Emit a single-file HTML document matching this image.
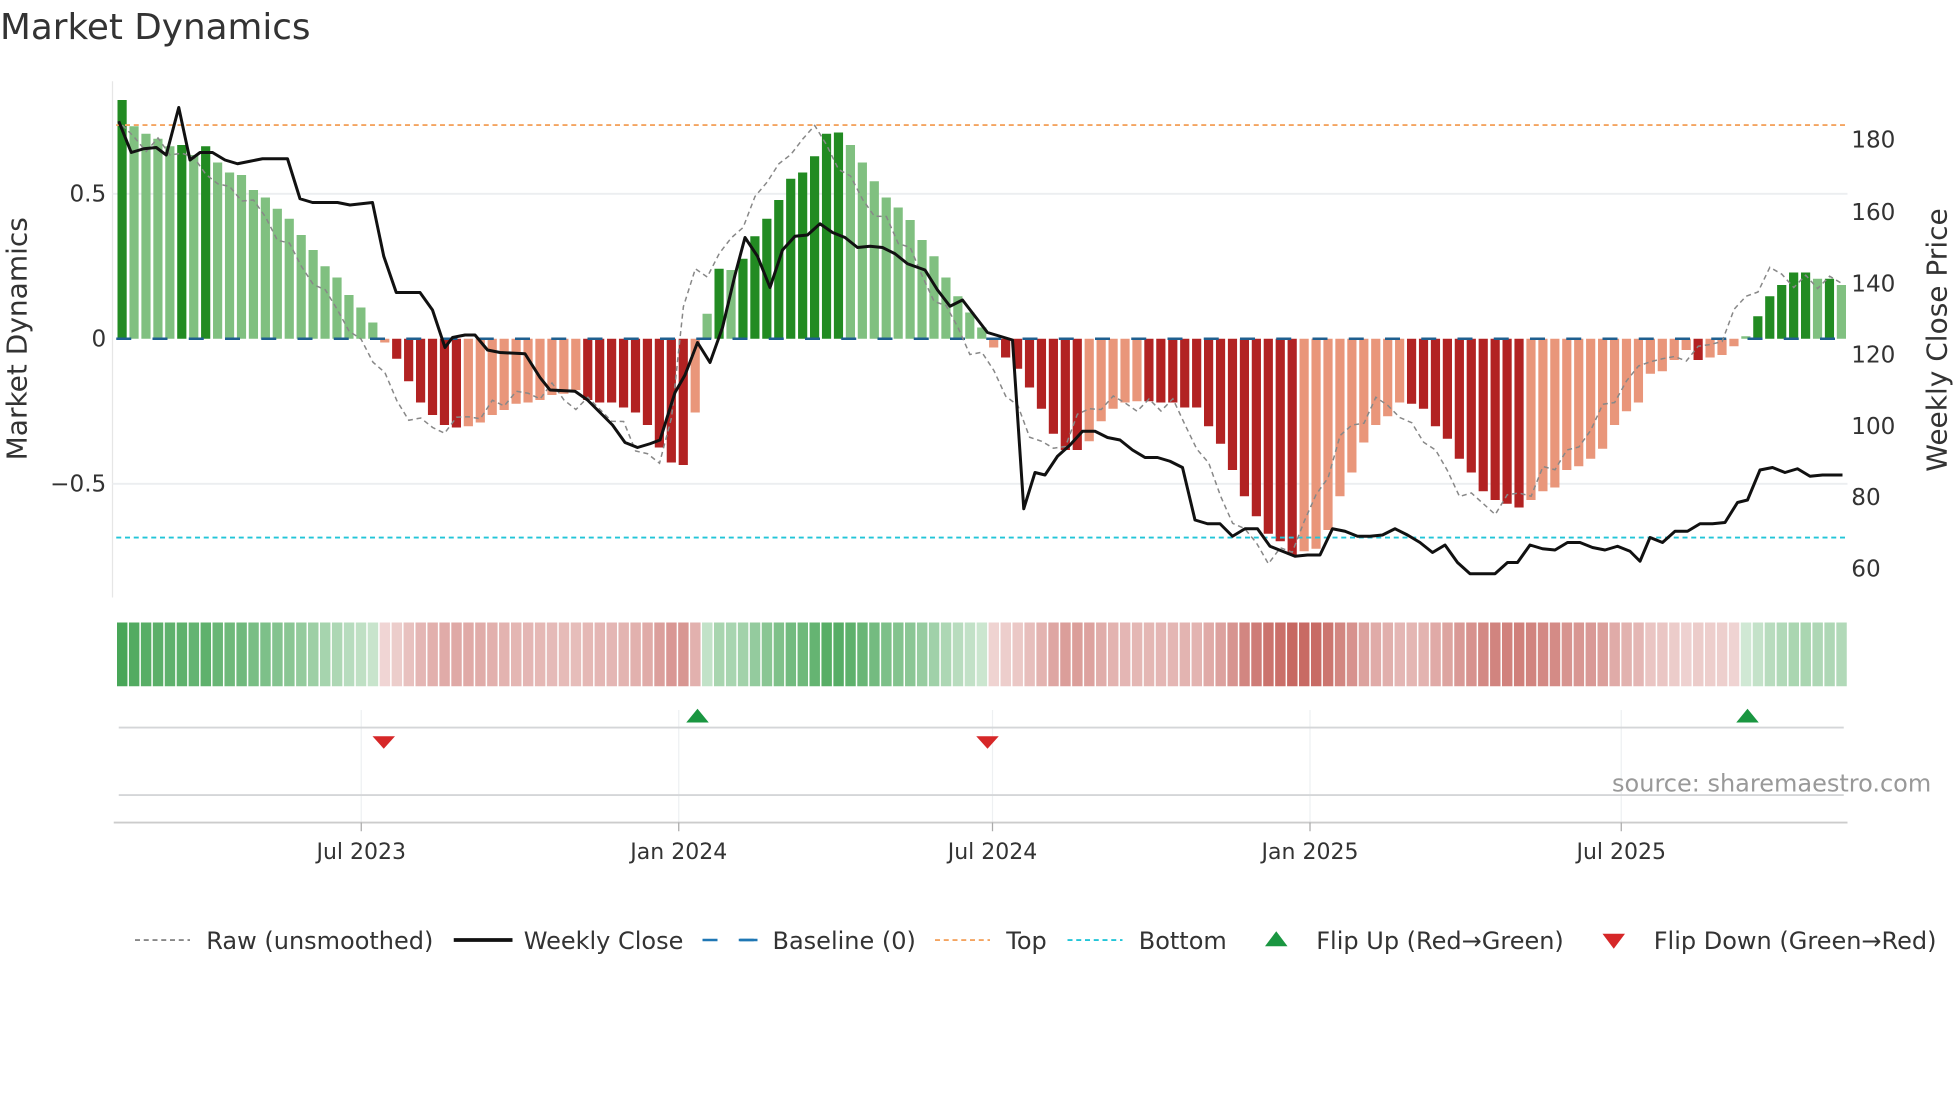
<!DOCTYPE html>
<html><head><meta charset="utf-8"><style>
html,body{margin:0;padding:0;background:#fff;}
svg{display:block;font-family:"DejaVu Sans","Liberation Sans",sans-serif;}
</style></head><body>
<svg id="s" width="1960" height="1102" viewBox="0 0 1568 881.6" xmlns="http://www.w3.org/2000/svg">
<rect width="1568" height="882" fill="#fff"/>
<text x="0" y="31" font-size="28.6" fill="#333">Market Dynamics</text>
<line x1="90" y1="65" x2="90" y2="478" stroke="#e6e6e6" stroke-width="1"/>
<line x1="90" y1="155" x2="1478" y2="155" stroke="#eceef0" stroke-width="1.5"/>
<line x1="90" y1="387" x2="1478" y2="387" stroke="#eceef0" stroke-width="1.5"/>
<g id="bars"></g>
<g id="strip"></g>
<line x1="93" y1="100" x2="1478" y2="100" stroke="#f4a460" stroke-width="1.5" stroke-dasharray="4,3"/>
<line x1="93" y1="430" x2="1478" y2="430" stroke="#22c5d8" stroke-width="1.5" stroke-dasharray="4,3"/>
<line x1="93" y1="271" x2="1478" y2="271" stroke="#1f5f8f" stroke-width="2" stroke-dasharray="12,17"/>
<polyline id="raw" fill="none" stroke="#888" stroke-width="1.2" stroke-dasharray="4,3"/>
<polyline id="close" fill="none" stroke="#111" stroke-width="2.4" stroke-linejoin="round"/>
<g font-size="18.5" fill="#333" text-anchor="end">
<text x="85" y="161">0.5</text><text x="85" y="277">0</text><text x="85" y="393">−0.5</text>
</g>
<g font-size="18.5" fill="#333">
<text x="1481" y="118">180</text><text x="1481" y="176">160</text><text x="1481" y="233">140</text><text x="1481" y="290">120</text><text x="1481" y="347">100</text><text x="1481" y="404">80</text><text x="1481" y="461">60</text>
</g>
<text transform="translate(21,271) rotate(-90)" font-size="22.4" fill="#333" text-anchor="middle">Market Dynamics</text>
<text transform="translate(1557,272) rotate(-90)" font-size="22.4" fill="#333" text-anchor="middle">Weekly Close Price</text>
<g stroke="#eef0f2" stroke-width="1">
<line x1="289" y1="568" x2="289" y2="658"/><line x1="543" y1="568" x2="543" y2="658"/><line x1="794" y1="568" x2="794" y2="658"/><line x1="1048" y1="568" x2="1048" y2="658"/><line x1="1297" y1="568" x2="1297" y2="658"/>
</g>
<line x1="95" y1="582" x2="1475" y2="582" stroke="#d4d6d8" stroke-width="1.5"/>
<line x1="95" y1="636" x2="1475" y2="636" stroke="#d4d6d8" stroke-width="1.5"/>
<line x1="91" y1="658" x2="1478" y2="658" stroke="#ccc" stroke-width="1.5"/>
<g stroke="#aaa" stroke-width="1"><line x1="289" y1="658" x2="289" y2="665"/><line x1="543" y1="658" x2="543" y2="665"/><line x1="794" y1="658" x2="794" y2="665"/><line x1="1048" y1="658" x2="1048" y2="665"/><line x1="1297" y1="658" x2="1297" y2="665"/></g>
<polygon points="298,589 316,589 307,599" fill="#d62728"/>
<polygon points="781,589 799,589 790,599" fill="#d62728"/>
<polygon points="549,578 567,578 558,567" fill="#1a9641"/>
<polygon points="1389,578 1407,578 1398,567" fill="#1a9641"/>
<g font-size="17.6" fill="#333" text-anchor="middle">
<text x="289" y="687">Jul 2023</text><text x="543" y="687">Jan 2024</text><text x="794" y="687">Jul 2024</text><text x="1048" y="687">Jan 2025</text><text x="1297" y="687">Jul 2025</text>
</g>
<text x="1545" y="633" font-size="19.2" fill="#999" text-anchor="end">source: sharemaestro.com</text>
<g font-size="19.2" fill="#333">
<line x1="108" y1="752" x2="152" y2="752" stroke="#888" stroke-width="1.5" stroke-dasharray="4,3"/>
<text x="165" y="759">Raw (unsmoothed)</text>
<line x1="363" y1="752" x2="410" y2="752" stroke="#111" stroke-width="3"/>
<text x="419" y="759">Weekly Close</text>
<line x1="562" y1="752" x2="606" y2="752" stroke="#1f77b4" stroke-width="2" stroke-dasharray="12,17"/>
<line x1="592" y1="752" x2="606" y2="752" stroke="#1f77b4" stroke-width="2"/>
<text x="618" y="759">Baseline (0)</text>
<line x1="748" y1="752" x2="792" y2="752" stroke="#f4a460" stroke-width="1.5" stroke-dasharray="4,3"/>
<text x="805" y="759">Top</text>
<line x1="854" y1="752" x2="898" y2="752" stroke="#22c5d8" stroke-width="1.5" stroke-dasharray="4,3"/>
<text x="911" y="759">Bottom</text>
<polygon points="1012,757 1030,757 1021,745" fill="#1a9641"/>
<text x="1053" y="759">Flip Up (Red→Green)</text>
<polygon points="1282,747 1300,747 1291,759" fill="#d62728"/>
<text x="1323" y="759">Flip Down (Green→Red)</text>
</g>
</svg>
<script>
var tops=[80,101,107,111,117,116,124,117,130,138,140,152,158,167,175,188,200,213,222,236,246,258,
274,287,305,322,332,340,342,341,338,332,328,323,322,320,316,315,312,320,322,322,326,330,340,358,370,372,330,
251,215,216,207,189,175,160,143,138,125,107,106,116,130,145,158,166,176,192,205,222,237,250,262,
278,286,295,310,327,347,360,360,353,337,327,322,321,321,322,322,326,326,341,355,376,397,413,427,433,444,441,439,424,397,378,354,340,333,322,323,327,341,351,367,378,393,400,403,406,400,393,390,376,373,367,359,340,329,322,299,297,288,280,288,286,284,277,269,253,237,228,218,218,223,223,228];
var N=tops.length,x0=93,w=(1478-93)/N,Z=271,svgns="http://www.w3.org/2000/svg";
var b=document.getElementById('bars'),st=document.getElementById('strip');
function el(t,a,p){var e=document.createElementNS(svgns,t);for(var k in a)e.setAttribute(k,a[k]);p.appendChild(e);return e;}
var raw=[];
for(var i=0;i<N;i++){
 var y=tops[i],v=(Z-y),pv=i>0?(Z-tops[i-1]):0;
 var dark=Math.abs(v)>=Math.abs(pv)&&(i==0||(v>0)==(pv>0)||Math.abs(pv)<5);
 var col=v>=0?(dark?'#228b22':'#80c080'):(dark?'#b22222':'#e9967a');
 var x=x0+i*w;
 el('rect',{x:x+1,y:Math.min(y,Z),width:w-2.2,height:Math.abs(v)||0.5,fill:col},b);
 var a=Math.min(1,0.25+0.75*Math.abs(v)/185);
 var c=v>=0?[72,166,88]:[196,96,90];
 var f='rgb('+c.map(function(q){return Math.round(255-(255-q)*a)}).join(',')+')';
 el('rect',{x:x+0.6,y:498,width:w-1.2,height:51,fill:f},st);
 var nx=tops[Math.min(N-1,i+2)];
 raw.push((x+w/2).toFixed(1)+','+(nx+((i*37)%11-5)*1.4).toFixed(1));
}
document.getElementById('raw').setAttribute('points',raw.join(' '));
document.getElementById('close').setAttribute('points',"95,97 105,122 115,119 125,118 133,124 143,86 152,128 160,122 170,122 180,128 190,131 200,129 210,127 230,127 240,159 250,162 270,162 280,164 298,162 307,205 317,234 336,234 346,248 356,278 362,270 372,268 380,268 390,280 400,282 420,283 432,302 440,312 460,313 470,320 480,330 490,340 500,354 510,358 520,355 528,352 540,314 548,300 558,274 568,290 578,262 588,220 596,190 606,205 616,230 626,200 636,189 646,188 656,179 666,186 676,190 686,198 696,197 706,198 716,203 726,211 740,216 750,232 760,245 770,240 780,253 790,266 800,269 810,272 819,407 828,378 836,380 846,365 856,356 866,345 876,345 886,350 896,352 906,360 916,366 926,366 936,369 946,374 956,416 966,419 976,419 986,429 996,423 1006,423 1016,437 1026,441 1036,445 1046,444 1056,444 1066,423 1076,425 1086,429 1096,429 1106,428 1116,423 1126,428 1136,434 1146,442 1156,436 1166,450 1176,459 1196,459 1206,450 1214,450 1224,436 1234,439 1244,440 1254,434 1264,434 1274,438 1284,440 1294,437 1304,441 1312,449 1320,430 1330,434 1340,425 1350,425 1360,419 1370,419 1380,418 1390,402 1398,400 1408,376 1418,374 1428,378 1438,375 1448,381 1458,380 1474,380");
</script>
</body></html>
